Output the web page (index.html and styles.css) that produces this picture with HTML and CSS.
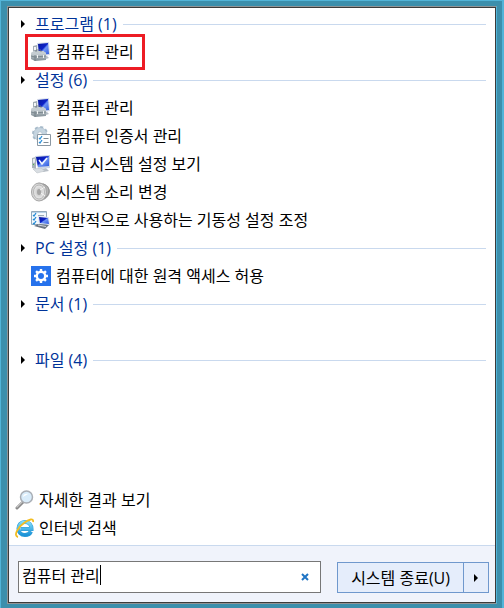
FILE: index.html
```html
<!DOCTYPE html>
<html lang="ko">
<head>
    <meta charset="UTF-8">
    <meta name="viewport" content="width=device-width, initial-scale=1.0">
    <title>시작 메뉴 검색</title>
    <link rel="stylesheet" href="styles.css">
</head>
<body>
    <!-- 공용 아이콘 -->
    <svg class="defs" width="0" height="0" aria-hidden="true">
        <defs>
            <linearGradient id="screen" x1="0" y1="0" x2="1" y2="1">
                <stop offset="0" stop-color="#0a1a9c"/>
                <stop offset="0.45" stop-color="#0c22c8"/>
                <stop offset="0.55" stop-color="#6f95f5"/>
                <stop offset="1" stop-color="#2a55dc"/>
            </linearGradient>
            <linearGradient id="metal" x1="0" y1="0" x2="0" y2="1">
                <stop offset="0" stop-color="#dfe5e8"/>
                <stop offset="1" stop-color="#7f8c94"/>
            </linearGradient>
            <radialGradient id="cone">
                <stop offset="0" stop-color="#8b8b8b"/>
                <stop offset="0.3" stop-color="#c9c9c9"/>
                <stop offset="1" stop-color="#ececec"/>
            </radialGradient>
            <linearGradient id="ie" x1="0" y1="0" x2="0" y2="1">
                <stop offset="0" stop-color="#7fdcf8"/>
                <stop offset="1" stop-color="#1c93d8"/>
            </linearGradient>
            <symbol id="icon-manage" viewBox="0 0 20 20">
                <path d="M9 15l7-1 2 2-6 2z" fill="#b4bcc4"/>
                <path d="M6 1l12-1 1 13-12 2z" fill="#d5dcea"/>
                <path d="M7 2l10-1 1 11-10 1z" fill="url(#screen)"/>
                <path d="M2 4l4-1v7H2z" fill="#a3adb4"/>
                <path d="M3 5h2v3H3z" fill="#f4f6f7"/>
                <path d="M0 11l3-2h9l3 2v7l-11 1-4-2z" fill="url(#metal)"/>
                <path d="M0 11l3-2h9l3 2-11 2z" fill="#c5cdd2"/>
                <path d="M5 10V8h5v2M4 13v6M0 14l4 1 11-1" fill="none" stroke="#6f7c84" stroke-width=".8"/>
                <path d="M6 13h1v3H6zM12 13h1v3h-1z" fill="#f1f3f4"/>
            </symbol>
        </defs>
    </svg>

    <main class="start-menu">
        <div class="results">
            <section class="group">
                <h2 class="group-title"><span class="arrow"></span>프로그램 (1)</h2>
                <a href="#" class="item highlight">
                    <svg class="icon"><use href="#icon-manage"/></svg>컴퓨터 관리
                </a>
            </section>

            <section class="group">
                <h2 class="group-title"><span class="arrow"></span>설정 (6)</h2>
                <a href="#" class="item">
                    <svg class="icon"><use href="#icon-manage"/></svg>컴퓨터 관리
                </a>
                <a href="#" class="item">
                    <svg class="icon" viewBox="0 0 20 20">
                        <circle cx="9" cy="8" r="7" fill="none" stroke="#a9bccb" stroke-width="2" stroke-dasharray="3 2.5"/>
                        <circle cx="9" cy="8" r="4.5" fill="none" stroke="#c6d5e0" stroke-width="4"/>
                        <circle cx="9" cy="8" r="6.5" fill="none" stroke="#9fb4c4" stroke-width=".6"/>
                        <circle cx="9" cy="8" r="2.3" fill="#fff" stroke="#8fa6b8" stroke-width=".6"/>
                        <path d="M6.500 8.500h13v11h-13z" fill="#fff" stroke="#8b98a3"/>
                        <path d="M8 12l1 1 2-3M8 16l1 1 2-3" fill="none" stroke="#2b8fd8" stroke-width="1.300"/>
                        <path d="M12.500 12.500h5M12.500 16.500h5" stroke="#7d8a94"/>
                    </svg>컴퓨터 인증서 관리
                </a>
                <a href="#" class="item">
                    <svg class="icon" viewBox="0 0 20 20">
                        <path d="M1 4l4-1v12l-4-1z" fill="#a8b2b9"/>
                        <path d="M2 5l2-.5v4l-2 .5z" fill="#e7ecef"/>
                        <path d="M2 10h1v1H2z" fill="#4fbf4a"/>
                        <path d="M10 15l5-1 3 3-6 1z" fill="#b7bec6"/>
                        <path d="M4 2l15-1v13l-12 1z" fill="#ccd5e6"/>
                        <path d="M5 3l13-1v10l-11 1z" fill="url(#screen)"/>
                        <path d="M8 6l3 4 5-6" fill="none" stroke="#f4f7ff" stroke-width="1.500"/>
                        <path d="M2 15l8-1 4 3-8 2z" fill="#d8dde2" stroke="#b4bcc3" stroke-width=".5"/>
                    </svg>고급 시스템 설정 보기
                </a>
                <a href="#" class="item">
                    <svg class="icon" viewBox="0 0 20 20">
                        <path d="M7 1c6-1 11 3 12 8 0 4-3 8-9 10z" fill="#b3b3b3"/>
                        <path d="M12 2c4 1 6 4 6 7s-2 6-5 8" fill="none" stroke="#8f8f8f"/>
                        <ellipse cx="8" cy="10" rx="7.500" ry="9" fill="#d7d7d7" stroke="#a5a5a5"/>
                        <ellipse cx="8" cy="10" rx="5.500" ry="7" fill="url(#cone)" stroke="#b5b5b5"/>
                        <ellipse cx="8" cy="10" rx="2" ry="3" fill="#a5a5a5"/>
                        <path d="M9 8l5-3M10 11l4 3" stroke="#f6f6f6"/>
                    </svg>시스템 소리 변경
                </a>
                <a href="#" class="item">
                    <svg class="icon" viewBox="0 0 20 20">
                        <path d="M.5 1.500h15v13H.5z" fill="#f4f9fd" stroke="#93a9bb"/>
                        <path d="M1 2h14v1H1z" fill="#b9d3e8"/>
                        <path d="M2 5l1 1 2-3M2 9l1 1 2-3M2 13l1 1 2-3" fill="none" stroke="#238bd6" stroke-width="1.300"/>
                        <path d="M7 5.500h6" stroke="#9aa9b5"/>
                        <path d="M7 6l11 1 1 8-11-1z" fill="#dbe3ef"/>
                        <path d="M8 7l9 1 1 6-9-1z" fill="url(#screen)"/>
                        <path d="M7 14l11 1-4 4-11-3z" fill="#6d7682"/>
                        <path d="M7 15l8 1.500" stroke="#d0d5da"/>
                    </svg>일반적으로 사용하는 기동성 설정 조정
                </a>
            </section>

            <section class="group">
                <h2 class="group-title"><span class="arrow"></span>PC 설정 (1)</h2>
                <a href="#" class="item">
                    <svg class="icon" viewBox="0 0 20 20">
                        <path d="M0 0h20v20H0z" fill="#2672ec"/>
                        <circle cx="10" cy="10" r="4.200" fill="none" stroke="#fff" stroke-width="2.400"/>
                        <path d="M10 3v3M10 14v3M3 10h3M14 10h3M5.050 5.050l2 2M12.950 12.950l2 2M14.950 5.050l-2 2M7.050 12.950l-2 2" stroke="#fff" stroke-width="2.400"/>
                    </svg>컴퓨터에 대한 원격 액세스 허용
                </a>
            </section>

            <section class="group group-empty">
                <h2 class="group-title"><span class="arrow"></span>문서 (1)</h2>
            </section>

            <section class="group">
                <h2 class="group-title"><span class="arrow"></span>파일 (4)</h2>
            </section>
        </div>

        <nav class="more">
            <a href="#" class="more-link">
                <svg class="icon" viewBox="0 0 20 20">
                    <path d="M8 12l-6 6" stroke="#8a8a8a" stroke-width="3" stroke-linecap="round"/>
                    <path d="M7 12l-5 5" stroke="#c5c5c5" stroke-width="1.200" stroke-linecap="round"/>
                    <circle cx="11.500" cy="7" r="6" fill="#d9ecfa" stroke="#a9aeb5" stroke-width="1.500"/>
                    <path d="M8 7c0-3 3-4 6-3-2 0-4 2-6 3z" fill="#fff"/>
                </svg>자세한 결과 보기
            </a>
            <a href="#" class="more-link">
                <svg class="icon" viewBox="0 0 20 20">
                    <path d="M16 13.500c-1 2-3 3.500-6 3.500-4 0-6.500-3-6.500-6.500S6 4 10 4s6.500 3 6.500 7H6" fill="none" stroke="#2c9bd6" stroke-width="4"/>
                    <path d="M16 13.500c-1 2-3 3.500-6 3.500-4 0-6.500-3-6.500-6.500S6 4 10 4s6.500 3 6.500 7H6" fill="none" stroke="url(#ie)" stroke-width="3"/>
                    <path d="M3 19c-5-1 0-10 6-14 5-4 10-5 9-1" fill="none" stroke="#f3bd20" stroke-width="1.800"/>
                </svg>인터넷 검색
            </a>
        </nav>

        <form class="footer">
            <div class="search-box">
                <input type="text" class="search-input" id="search" aria-label="검색" value="컴퓨터 관리">
                <span class="caret"></span>
                <button type="reset" class="clear-btn" aria-label="지우기">
                    <svg width="8" height="8" viewBox="0 0 8 8"><path d="M1 1l6 6M7 1L1 7" stroke="#1f74c4" stroke-width="2"/></svg>
                </button>
            </div>
            <div class="power">
                <button type="button" class="power-btn">시스템 종료(U)</button>
                <button type="button" class="power-more" aria-label="종료 옵션"><span class="arrow"></span></button>
            </div>
        </form>
    </main>
</body>
</html>
```
FILE: styles.css
```css
:root {
    --frame: #3c8fac;
    --frame-light: #52b4d8;
    --heading: #003399;
    --line: #c9d9ee;
    --footer-bg: #f0f3fb;
    --button-bg: #e5edfb;
    --button-border: #6f98cd;
}

* {
    box-sizing: border-box;
}

body {
    margin: 0;
    min-height: 100vh;
    display: flex;
    padding: 6px 7px 4px;
    background-color: var(--frame);
    box-shadow: inset 0 1px var(--frame-light), inset 1px 0 var(--frame-light), inset -2px 0 var(--frame-light);
    font-family: "Open Sans", "Noto Sans CJK KR", sans-serif;
    font-size: 16px;
    line-height: 28px;
    color: #000;
}

button,
input {
    font: inherit;
    color: inherit;
}

.defs {
    position: absolute;
}

.start-menu {
    flex: 1;
    display: flex;
    flex-direction: column;
    background-color: #fff;
    border: 1px solid #8f9496;
    border-right-color: var(--frame-light);
    box-shadow: inset 0 0 0 1px #3b3b3b;
    padding: 1px;
}

.results {
    flex: 1;
    padding: 2px 9px 0 12px;
}

.group-title {
    display: flex;
    align-items: center;
    margin: 0;
    font-size: 16px;
    font-weight: normal;
    color: var(--heading);
}

.group-title::after {
    content: "";
    flex: 1;
    height: 1px;
    margin-left: 6px;
    background-color: var(--line);
}

.group-empty {
    padding-bottom: 28px;
}

.arrow {
    border-left: 4px solid #000;
    border-top: 4px solid transparent;
    border-bottom: 4px solid transparent;
}

.group-title .arrow {
    margin-right: 10px;
}

.item,
.more-link {
    display: flex;
    align-items: center;
    color: inherit;
    text-decoration: none;
}

.item {
    position: relative;
    gap: 5px;
    padding-left: 10px;
}

.icon {
    width: 20px;
    height: 20px;
    flex: none;
}

/* 강조 표시 테두리 */
.highlight {
    width: fit-content;
}

.highlight::after {
    content: "";
    position: absolute;
    inset: -4px -11px -4px 4px;
    border: 3px solid #ed1c24;
}

.more {
    padding: 0 6px 3px;
}

.more-link {
    gap: 4px;
}

.footer {
    display: flex;
    align-items: center;
    gap: 16px;
    padding: 14px 6px 9px 9px;
    background-color: var(--footer-bg);
    border-top: 1px solid var(--line);
}

.search-box {
    position: relative;
    flex: 1;
    display: flex;
    align-items: center;
    height: 32px;
    background-color: #fff;
    border: 1px solid #777;
}

.search-input {
    flex: 1;
    min-width: 0;
    height: 26px;
    padding: 0 0 2px 3px;
    border: none;
    outline: none;
    background: none;
}

.caret {
    position: absolute;
    left: 81px;
    top: 3px;
    width: 1px;
    height: 20px;
    background-color: #000;
}

.clear-btn {
    display: flex;
    padding: 4px 11px;
    border: none;
    background: none;
}

.power {
    display: flex;
    height: 31px;
    margin-top: 2px;
    border: 1px solid var(--button-border);
}

.power-btn,
.power-more {
    display: flex;
    align-items: center;
    border: none;
    background-color: var(--button-bg);
}

.power-btn {
    padding: 0 13px;
}

.power-more {
    padding: 0 10px;
    border-left: 1px solid var(--button-border);
}
```
